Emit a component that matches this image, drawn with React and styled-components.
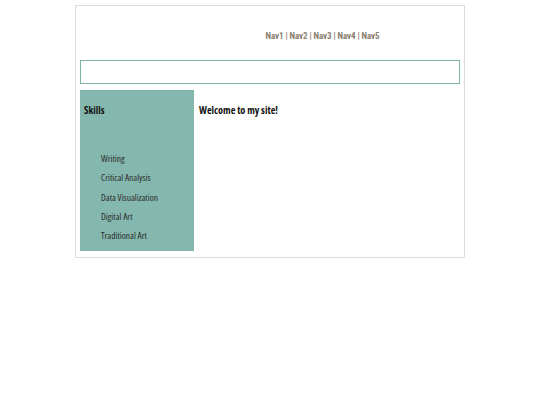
import React from 'react';
import styled, { createGlobalStyle } from 'styled-components';

const GlobalStyle = createGlobalStyle`
  body {
    margin: 0;
    background: #ffffff;
    font-family: "Open Sans", "Liberation Sans", sans-serif;
  }
`;

const Page = styled.div`
  width: 390px;
  box-sizing: border-box;
  margin: 5px auto 0;
  border: 1px solid #dcdcdc;
  padding: 0 4px 6px;
`;

const Header = styled.header`
  height: 54px;
  display: flex;
  align-items: center;
  justify-content: center;
  padding-left: 105px;
`;

const Nav = styled.nav`
  font-family: Roboto, "Liberation Sans", sans-serif;
  font-stretch: 75%;
  font-weight: 700;
  font-size: 9px;
  letter-spacing: -0.1px;
  color: #8b8070;
  padding-top: 6px;
`;

const SearchBar = styled.div`
  height: 22px;
  border: 1px solid #7fb3aa;
`;

const Main = styled.div`
  display: flex;
  gap: 5px;
  margin-top: 6px;
`;

const Sidebar = styled.aside`
  width: 114px;
  height: 161px;
  background: #84b8ae;
  padding: 13px 4px;
  box-sizing: border-box;
`;

const Heading = styled.h2`
  margin: 0;
  font-size: 10.2px;
  font-weight: 700;
  font-stretch: 75%;
  color: #111;
`;

const SkillList = styled.ul`
  list-style: none;
  margin: 32px 0 0;
  padding: 0 0 0 17px;
`;

const Skill = styled.li`
  font-size: 9.4px;
  font-weight: 400;
  font-stretch: 75%;
  color: #2a2a2a;
  line-height: 19.3px;
`;

const Content = styled.section`
  flex: 1;
  padding-top: 13px;
`;

const skills = ['Writing', 'Critical Analysis', 'Data Visualization', 'Digital Art', 'Traditional Art'];

export default function App() {
  return (
    <>
      <GlobalStyle />
      <Page>
        <Header>
          <Nav>Nav1 | Nav2 | Nav3 | Nav4 | Nav5</Nav>
        </Header>
        <SearchBar />
        <Main>
          <Sidebar>
            <Heading>Skills</Heading>
            <SkillList>
              {skills.map((s) => (
                <Skill key={s}>{s}</Skill>
              ))}
            </SkillList>
          </Sidebar>
          <Content>
            <Heading>Welcome to my site!</Heading>
          </Content>
        </Main>
      </Page>
    </>
  );
}
